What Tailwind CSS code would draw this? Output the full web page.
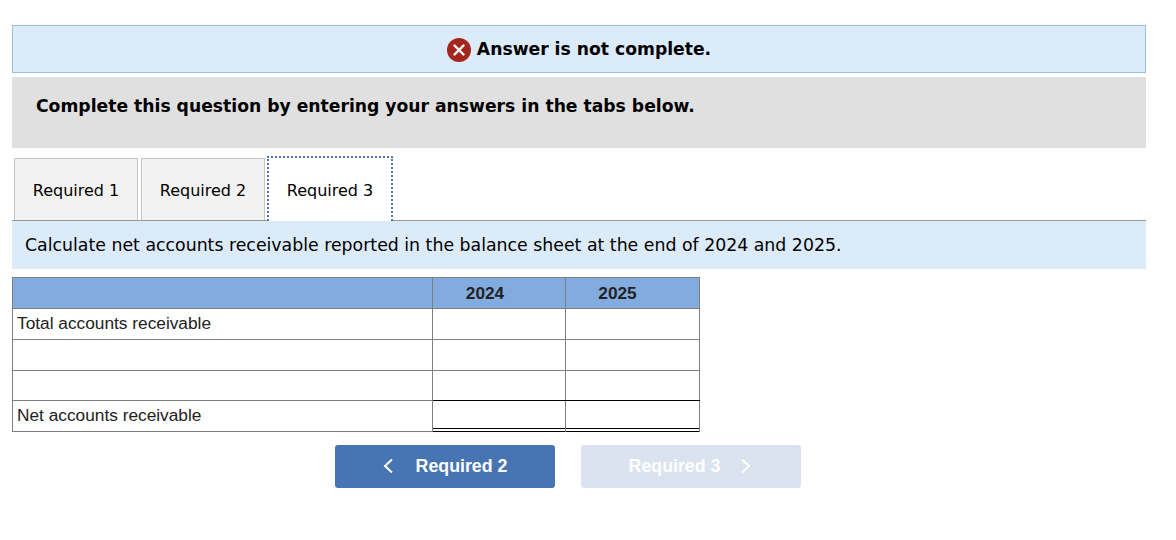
<!DOCTYPE html>
<html lang="en">
<head>
    <meta charset="UTF-8">
    <title>Answer is not complete</title>
    <script src="https://cdn.jsdelivr.net/npm/@tailwindcss/browser@4"></script>
</head>
<body class="bg-white w-[1176px] h-[540px] overflow-hidden font-['DejaVu_Sans',sans-serif] text-black">
    <div class="ml-[12px] mr-[30px] pt-[25px]">

        <!-- Status banner -->
        <div class="h-[48px] bg-[#dcebf9] border border-[#9cbfe2] flex items-center justify-center pt-[1px]">
            <svg class="w-[24px] h-[24px] mr-[6px]" viewBox="0 0 24 24">
                <circle cx="12" cy="12" r="12" fill="#a4271d"/>
                <path d="M7.5 7.5l9 9M16.5 7.5l-9 9" stroke="#fff" stroke-width="2.4" stroke-linecap="round"/>
            </svg>
            <span class="text-[17.2px] font-bold">Answer is not complete.</span>
        </div>

        <div class="mt-[4px] h-[71px] bg-[#e0e0e0] pl-[24px] pt-[19px]">
            <p class="text-[17.2px] leading-[21px] font-bold">Complete this question by entering your answers in the tabs below.</p>
        </div>

        <!-- Tabs -->
        <div class="mt-[10px] h-[63px] border-b border-[#9a9a9a] flex items-end pl-[2px] gap-[3px] text-[16px]">
            <div class="w-[124px] h-[62px] bg-[#f2f2f2] border border-b-0 border-[#c4c4c4] flex items-center justify-center pt-[2px]">Required 1</div>
            <div class="w-[124px] h-[62px] bg-[#f2f2f2] border border-b-0 border-[#c4c4c4] flex items-center justify-center pt-[2px]">Required 2</div>
            <div class="w-[126px] h-[65px] -ml-[1px] -mb-[1px] bg-white border-2 border-b-0 border-dotted border-[#4a76b5] flex items-center justify-center pt-[2px]">Required 3</div>
        </div>

        <div class="h-[48px] bg-[#dcebf9] pl-[13px] pt-[1px] flex items-center text-[17.33px]">
            Calculate net accounts receivable reported in the balance sheet at the end of 2024 and 2025.
        </div>

        <!-- Table -->
        <table class="mt-[8px] w-[687px] h-[155px] table-fixed border-collapse font-['Liberation_Sans',sans-serif] text-[17.3px] text-[#222]">
            <colgroup>
                <col class="w-[420px]">
                <col class="w-[133px]">
                <col class="w-[134px]">
            </colgroup>
            <tr class="h-[31px] bg-[#82abdf] font-bold text-center">
                <td class="border border-[#7f7f7f]"></td>
                <td class="border border-[#7f7f7f] pr-[28px] pt-[1px]">2024</td>
                <td class="border border-[#7f7f7f] pr-[30px] pt-[1px]">2025</td>
            </tr>
            <tr class="h-[31px]">
                <td class="border border-[#7f7f7f] pl-[4px]">Total accounts receivable</td>
                <td class="border border-[#7f7f7f]"></td>
                <td class="border border-[#7f7f7f]"></td>
            </tr>
            <tr class="h-[31px]">
                <td class="border border-[#7f7f7f]"></td>
                <td class="border border-[#7f7f7f]"></td>
                <td class="border border-[#7f7f7f]"></td>
            </tr>
            <tr class="h-[30px]">
                <td class="border border-[#7f7f7f]"></td>
                <td class="border border-[#7f7f7f] border-b-black"></td>
                <td class="border border-[#7f7f7f] border-b-black"></td>
            </tr>
            <tr class="h-[31px]">
                <td class="border border-[#7f7f7f] pl-[4px]">Net accounts receivable</td>
                <td class="relative border border-[#7f7f7f] border-t-black">
                    <div class="absolute inset-x-0 -bottom-[1px] h-[4px] border-y border-black"></div>
                </td>
                <td class="relative border border-[#7f7f7f] border-t-black">
                    <div class="absolute inset-x-0 -bottom-[1px] h-[4px] border-y border-black"></div>
                </td>
            </tr>
        </table>

        <!-- Prev / next -->
        <div class="mt-[13px] ml-[323px] flex gap-[26px] font-['Liberation_Sans',sans-serif] text-[17.8px] font-bold text-white">
            <div class="w-[220px] h-[43px] rounded-[3px] bg-[#4775b4] flex items-center justify-center gap-[23px] pb-[1px]">
                <svg class="w-[10px] h-[16px]" viewBox="0 0 10 16" fill="none" stroke="#fff" stroke-width="2"><path d="M9 1.5L2 8l7 6.5"/></svg>
                <span>Required 2</span>
            </div>
            <div class="w-[220px] h-[43px] rounded-[3px] bg-[#dae3ef] flex items-center justify-center gap-[21px] pr-[2px] pb-[1px]">
                <span>Required 3</span>
                <svg class="w-[10px] h-[16px]" viewBox="0 0 10 16" fill="none" stroke="#fff" stroke-width="2"><path d="M1 1.5L8 8l-7 6.5"/></svg>
            </div>
        </div>
    </div>
</body>
</html>
